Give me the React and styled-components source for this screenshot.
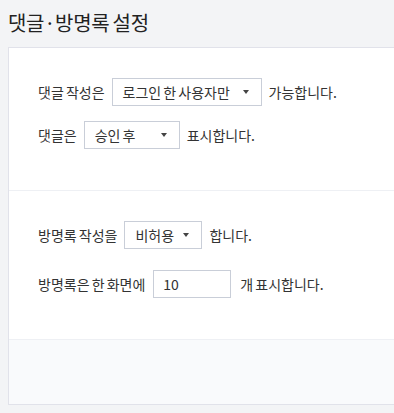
import React from 'react'
import styled, { createGlobalStyle } from 'styled-components'

const Global = createGlobalStyle`
    html, body {
        margin: 0;
        padding: 0;
        background: #f3f4f6;
        font-family: "Noto Sans CJK KR", "Noto Sans", sans-serif;
        color: #333;
        word-spacing: -1px;
    }
`

const Page = styled.div`
    padding: 0 0 9px 8px;
`

const Title = styled.h2`
    margin: 0;
    height: 47px;
    line-height: 45px;
    font-size: 20px;
    font-weight: 400;
    color: #222;
    letter-spacing: -0.3px;
`

const Card = styled.div`
    background: #fff;
    border: 1px solid #e1e2ea;
    border-right: none;
`

const Section = styled.div`
    padding: 30px 0 41px 29px;
    border-bottom: 1px solid #eef0f4;
    display: flex;
    flex-direction: column;
    gap: ${p => p.$gap}px;
`

const Row = styled.div`
    display: flex;
    align-items: center;
    height: 28px;
    font-size: 14px;
    color: #333;
    white-space: nowrap;
`

const SelectBox = styled.div`
    box-sizing: border-box;
    width: ${p => p.$w}px;
    height: 28px;
    margin: 0 7px 0 7px;
    padding: 0 12px 0 10px;
    border: 1px solid #c9ced8;
    background: #fff;
    display: flex;
    align-items: center;
    justify-content: space-between;
    font-size: 14px;
    color: #333;
`

const Caret = styled.span`
    width: 0;
    height: 0;
    border-left: 3.5px solid transparent;
    border-right: 3.5px solid transparent;
    border-top: 4px solid #444;
`

const NumberInput = styled.input`
    box-sizing: border-box;
    width: 78px;
    height: 28px;
    margin: 0 9px 0 8px;
    padding: 0 9px;
    border: 1px solid #c9ced8;
    font-family: inherit;
    font-size: 14px;
    color: #333;
    outline: none;
`

const Footer = styled.div`
    height: 64px;
    background: #f9fafc;
`

function Select({ width, children }) {
    return (
        <SelectBox $w={width}>
            <span>{children}</span>
            <Caret />
        </SelectBox>
    )
}

export default function App() {
    return (
        <Page>
            <Global />
            <Title>댓글·방명록 설정</Title>
            <Card>
                <Section $gap={15}>
                    <Row>
                        댓글 작성은
                        <Select width={150}>로그인 한 사용자만</Select>
                        가능합니다.
                    </Row>
                    <Row>
                        댓글은
                        <Select width={96}>승인 후</Select>
                        표시합니다.
                    </Row>
                </Section>
                <Section $gap={21}>
                    <Row>
                        방명록 작성을
                        <Select width={78}>비허용</Select>
                        합니다.
                    </Row>
                    <Row>
                        방명록은 한 화면에
                        <NumberInput defaultValue="10" />
                        개 표시합니다.
                    </Row>
                </Section>
                <Footer />
            </Card>
        </Page>
    )
}
